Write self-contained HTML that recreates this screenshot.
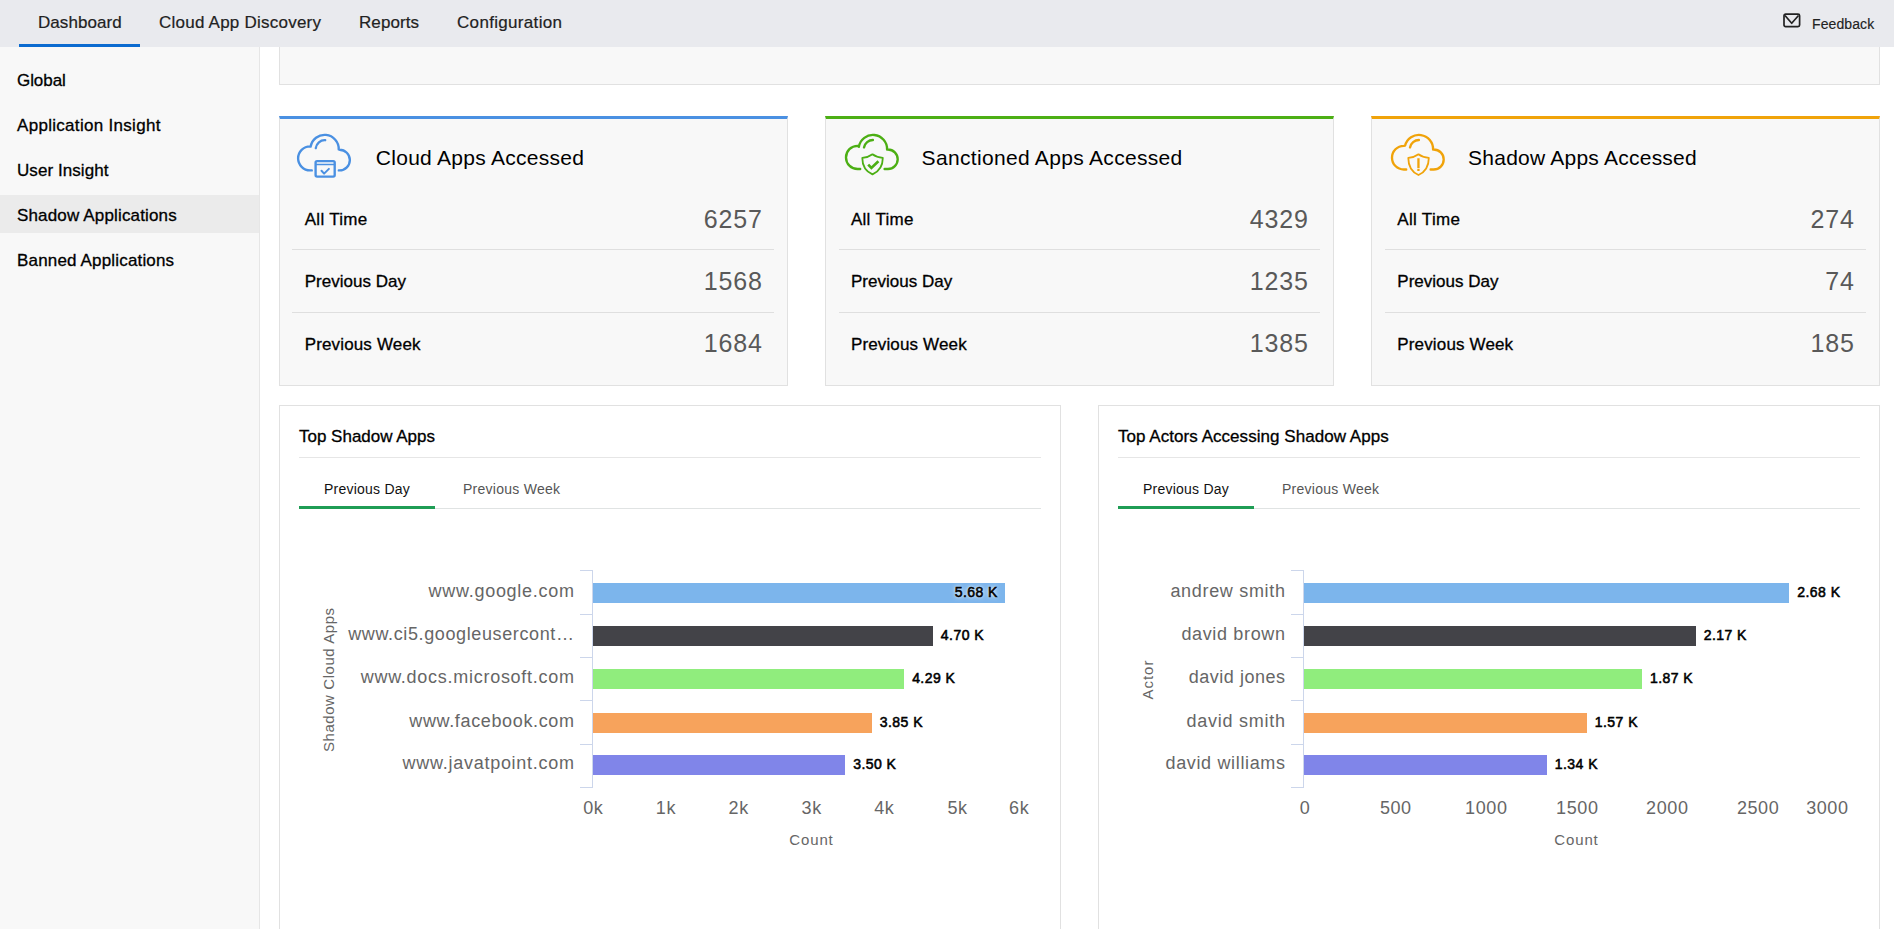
<!DOCTYPE html>
<html>
<head>
<meta charset="utf-8">
<title>Shadow Applications</title>
<style>
html,body{margin:0;padding:0;}
html{width:1894px;height:929px;overflow:hidden;}
body{width:1894px;height:929px;overflow:hidden;position:relative;background:#fff;font-family:"Liberation Sans",sans-serif;}
.b{position:absolute;box-sizing:border-box;}
.t{position:absolute;white-space:pre;font-family:"Liberation Sans",sans-serif;}
svg{position:absolute;overflow:visible;}
</style>
</head>
<body>
<div class="b" style="left:0px;top:0px;width:1894px;height:47px;background:#e9eaee;"></div>
<div class="b" style="left:19px;top:44px;width:121px;height:3px;background:#0b6bd0;"></div>
<svg style="left:1782px;top:12px" width="20" height="17" viewBox="0 0 20 17"><rect x="2" y="2.2" width="15.6" height="12.4" rx="1.6" fill="none" stroke="#222" stroke-width="1.7"/><path d="M3 3.5 L9.7 11.3 L16.5 3.5" fill="none" stroke="#222" stroke-width="1.7" stroke-linejoin="round"/></svg>
<div class="b" style="left:0px;top:47px;width:260px;height:882px;background:#f8f8f8;border-right:1px solid #e6e6e6;"></div>
<div class="b" style="left:0px;top:195px;width:259px;height:38px;background:#ebebeb;"></div>
<div class="b" style="left:279px;top:47px;width:1601px;height:38px;background:#f8f8f8;border:1px solid #e1e1e1;border-top:none;"></div>
<div class="b" style="left:279px;top:116px;width:509px;height:270px;background:#f8f8f8;border:1px solid #e1e1e1;border-top:3px solid #4a90e2;"></div>
<div class="b" style="left:292px;top:249px;width:482px;height:1px;background:#dfdfdf;"></div>
<div class="b" style="left:292px;top:312px;width:482px;height:1px;background:#dfdfdf;"></div>
<svg style="left:294px;top:130px" width="60" height="50" viewBox="0 0 60 50" fill="none" stroke="#4a90e2" stroke-width="2.35" stroke-linecap="round" stroke-linejoin="round"><path d="M17.8,40.4 H16.15 A12.05,12.05 0 0 1 4.1,28.35 A12.05,12.05 0 0 1 16.15,16.3 L16.65,16.58 A14.15,14.15 0 0 1 44.74,19.44 L45.50,19.7 A10.35,10.35 0 0 1 55.85,30.05 A10.35,10.35 0 0 1 45.50,40.4 H44.8"/><path d="M21.8,18.2 A8.9,8.9 0 0 1 31.2,10.2"/><rect x="21.6" y="31.1" width="19.1" height="15.5" rx="1.5" /><path d="M21.8,34.5 H40.7" stroke-width="1.3"/><path d="M27.5,40.8 L30.1,43.6 L34.9,38.9" stroke-width="2"/></svg>
<div class="b" style="left:825px;top:116px;width:509px;height:270px;background:#f8f8f8;border:1px solid #e1e1e1;border-top:3px solid #4caf14;"></div>
<div class="b" style="left:839px;top:249px;width:481px;height:1px;background:#dfdfdf;"></div>
<div class="b" style="left:839px;top:312px;width:481px;height:1px;background:#dfdfdf;"></div>
<svg style="left:841.6px;top:130px" width="60" height="50" viewBox="0 0 60 50" fill="none" stroke="#4caf14" stroke-width="2.35" stroke-linecap="round" stroke-linejoin="round"><path d="M18.2,39.0 H15.60 A11.60,11.60 0 0 1 4.0,27.40 A11.60,11.60 0 0 1 15.60,15.8 L16.90,16.73 A14.2,14.2 0 0 1 45.09,19.60 L45.95,19.5 A9.75,9.75 0 0 1 55.7,29.25 A9.75,9.75 0 0 1 45.95,39.0 H42.6"/><path d="M22.0,17.4 A9.2,9.2 0 0 1 30.9,10.0"/><path d="M30.5,24.3 C28,26.2 24.5,27.5 20.3,27.9 C20.3,36.2 24,41.4 30.5,44.4 C36.9,41.4 40.8,36.2 40.8,27.9 C36.6,27.5 33,26.2 30.5,24.3 Z" stroke-width="1.8"/><path d="M26.2,34.6 L29.4,37.9 L36.4,31.3" stroke-width="2.7" stroke-linecap="butt" stroke-linejoin="miter"/></svg>
<div class="b" style="left:1371px;top:116px;width:509px;height:270px;background:#f8f8f8;border:1px solid #e1e1e1;border-top:3px solid #f0a30a;"></div>
<div class="b" style="left:1385px;top:249px;width:481px;height:1px;background:#dfdfdf;"></div>
<div class="b" style="left:1385px;top:312px;width:481px;height:1px;background:#dfdfdf;"></div>
<svg style="left:1387.6px;top:130px" width="60" height="50" viewBox="0 0 60 50" fill="none" stroke="#f0a30a" stroke-width="2.35" stroke-linecap="round" stroke-linejoin="round"><path d="M18.2,39.5 H15.85 A11.85,11.85 0 0 1 4.0,27.65 A11.85,11.85 0 0 1 15.85,15.8 L17.15,15.55 A14.2,14.2 0 0 1 45.09,19.60 L45.70,19.5 A10.00,10.00 0 0 1 55.7,29.50 A10.00,10.00 0 0 1 45.70,39.5 H42.6"/><path d="M22.0,17.4 A9.2,9.2 0 0 1 30.9,10.0"/><path d="M30.5,24.3 C28,26.2 24.5,27.5 20.3,27.9 C20.3,36.2 24,42.0 30.5,45.0 C36.9,42.0 40.8,36.2 40.8,27.9 C36.6,27.5 33,26.2 30.5,24.3 Z" stroke-width="1.8"/><path d="M30.45,28.2 V38.3 M30.45,38.9 V40.9" stroke-width="2.3" stroke-linecap="butt"/></svg>
<div class="b" style="left:279px;top:405px;width:782px;height:524px;background:#fff;border:1px solid #e1e1e1;border-bottom:none;"></div>
<div class="b" style="left:299px;top:457px;width:742px;height:1px;background:#e6e6e6;"></div>
<div class="b" style="left:299px;top:508px;width:742px;height:1px;background:#e0e3e3;"></div>
<div class="b" style="left:299px;top:506px;width:136px;height:3px;background:#1f9d55;"></div>
<div class="b" style="left:592px;top:570px;width:1px;height:218px;background:#ccd6eb;"></div>
<div class="b" style="left:580px;top:570px;width:12px;height:1px;background:#ccd6eb;"></div>
<div class="b" style="left:580px;top:614px;width:12px;height:1px;background:#ccd6eb;"></div>
<div class="b" style="left:580px;top:657px;width:12px;height:1px;background:#ccd6eb;"></div>
<div class="b" style="left:580px;top:700px;width:12px;height:1px;background:#ccd6eb;"></div>
<div class="b" style="left:580px;top:744px;width:12px;height:1px;background:#ccd6eb;"></div>
<div class="b" style="left:580px;top:787px;width:12px;height:1px;background:#ccd6eb;"></div>
<div class="b" style="left:593px;top:583px;width:412.1px;height:20px;background:#7cb5ec;"></div>
<div class="b" style="left:593px;top:626px;width:339.75px;height:20px;background:#434348;"></div>
<div class="b" style="left:593px;top:669px;width:311.05px;height:20px;background:#90ed7d;"></div>
<div class="b" style="left:593px;top:713px;width:278.7px;height:20px;background:#f7a35c;"></div>
<div class="b" style="left:593px;top:755px;width:252.1px;height:20px;background:#8085e9;"></div>
<div class="b" style="left:1098px;top:405px;width:782px;height:524px;background:#fff;border:1px solid #e1e1e1;border-bottom:none;"></div>
<div class="b" style="left:1118px;top:457px;width:742px;height:1px;background:#e6e6e6;"></div>
<div class="b" style="left:1118px;top:508px;width:742px;height:1px;background:#e0e3e3;"></div>
<div class="b" style="left:1118px;top:506px;width:136px;height:3px;background:#1f9d55;"></div>
<div class="b" style="left:1303px;top:570px;width:1px;height:218px;background:#ccd6eb;"></div>
<div class="b" style="left:1291px;top:570px;width:12px;height:1px;background:#ccd6eb;"></div>
<div class="b" style="left:1291px;top:614px;width:12px;height:1px;background:#ccd6eb;"></div>
<div class="b" style="left:1291px;top:657px;width:12px;height:1px;background:#ccd6eb;"></div>
<div class="b" style="left:1291px;top:700px;width:12px;height:1px;background:#ccd6eb;"></div>
<div class="b" style="left:1291px;top:744px;width:12px;height:1px;background:#ccd6eb;"></div>
<div class="b" style="left:1291px;top:787px;width:12px;height:1px;background:#ccd6eb;"></div>
<div class="b" style="left:1304px;top:583px;width:485.2px;height:20px;background:#7cb5ec;"></div>
<div class="b" style="left:1304px;top:626px;width:391.65px;height:20px;background:#434348;"></div>
<div class="b" style="left:1304px;top:669px;width:337.9px;height:20px;background:#90ed7d;"></div>
<div class="b" style="left:1304px;top:713px;width:282.7px;height:20px;background:#f7a35c;"></div>
<div class="b" style="left:1304px;top:755px;width:242.7px;height:20px;background:#8085e9;"></div>
<div class="t" style="left:38.00px;top:12px;font-size:17px;line-height:22px;color:#222;letter-spacing:0.054px;-webkit-text-stroke:0.2px #222;">Dashboard</div>
<div class="t" style="left:159.00px;top:12px;font-size:17px;line-height:22px;color:#222;letter-spacing:0.233px;-webkit-text-stroke:0.2px #222;">Cloud App Discovery</div>
<div class="t" style="left:359.00px;top:12px;font-size:17px;line-height:22px;color:#222;letter-spacing:0.078px;-webkit-text-stroke:0.2px #222;">Reports</div>
<div class="t" style="left:457.00px;top:12px;font-size:17px;line-height:22px;color:#222;letter-spacing:0.323px;-webkit-text-stroke:0.2px #222;">Configuration</div>
<div class="t" style="left:1812.00px;top:15px;font-size:14px;line-height:18px;color:#222;letter-spacing:0.102px;-webkit-text-stroke:0.15px #222;">Feedback</div>
<div class="t" style="left:17.00px;top:70px;font-size:17px;line-height:22px;color:#000;letter-spacing:-0.068px;-webkit-text-stroke:0.3px #000;">Global</div>
<div class="t" style="left:17.00px;top:115px;font-size:17px;line-height:22px;color:#000;letter-spacing:0.301px;-webkit-text-stroke:0.3px #000;">Application Insight</div>
<div class="t" style="left:17.00px;top:160px;font-size:17px;line-height:22px;color:#000;letter-spacing:0.072px;-webkit-text-stroke:0.3px #000;">User Insight</div>
<div class="t" style="left:17.00px;top:205px;font-size:17px;line-height:22px;color:#000;letter-spacing:0.156px;-webkit-text-stroke:0.3px #000;">Shadow Applications</div>
<div class="t" style="left:17.00px;top:250px;font-size:17px;line-height:22px;color:#000;letter-spacing:0.169px;-webkit-text-stroke:0.3px #000;">Banned Applications</div>
<div class="t" style="left:375.80px;top:144px;font-size:21px;line-height:27px;color:#000;letter-spacing:0.281px;">Cloud Apps Accessed</div>
<div class="t" style="left:304.70px;top:209px;font-size:17px;line-height:22px;color:#000;letter-spacing:0.304px;-webkit-text-stroke:0.3px #000;">All Time</div>
<div class="t" style="left:703.73px;top:203px;font-size:25px;line-height:32px;color:#595959;letter-spacing:0.850px;">6257</div>
<div class="t" style="left:304.70px;top:271px;font-size:17px;line-height:22px;color:#000;letter-spacing:0.017px;-webkit-text-stroke:0.3px #000;">Previous Day</div>
<div class="t" style="left:703.73px;top:265px;font-size:25px;line-height:32px;color:#595959;letter-spacing:0.850px;">1568</div>
<div class="t" style="left:304.70px;top:334px;font-size:17px;line-height:22px;color:#000;letter-spacing:0.149px;-webkit-text-stroke:0.3px #000;">Previous Week</div>
<div class="t" style="left:703.73px;top:327px;font-size:25px;line-height:32px;color:#595959;letter-spacing:0.850px;">1684</div>
<div class="t" style="left:921.60px;top:144px;font-size:21px;line-height:27px;color:#000;letter-spacing:0.320px;">Sanctioned Apps Accessed</div>
<div class="t" style="left:850.90px;top:209px;font-size:17px;line-height:22px;color:#000;letter-spacing:0.304px;-webkit-text-stroke:0.3px #000;">All Time</div>
<div class="t" style="left:1249.73px;top:203px;font-size:25px;line-height:32px;color:#595959;letter-spacing:0.850px;">4329</div>
<div class="t" style="left:850.90px;top:271px;font-size:17px;line-height:22px;color:#000;letter-spacing:0.017px;-webkit-text-stroke:0.3px #000;">Previous Day</div>
<div class="t" style="left:1249.73px;top:265px;font-size:25px;line-height:32px;color:#595959;letter-spacing:0.850px;">1235</div>
<div class="t" style="left:850.90px;top:334px;font-size:17px;line-height:22px;color:#000;letter-spacing:0.149px;-webkit-text-stroke:0.3px #000;">Previous Week</div>
<div class="t" style="left:1249.73px;top:327px;font-size:25px;line-height:32px;color:#595959;letter-spacing:0.850px;">1385</div>
<div class="t" style="left:1468.10px;top:144px;font-size:21px;line-height:27px;color:#000;letter-spacing:0.234px;">Shadow Apps Accessed</div>
<div class="t" style="left:1397.30px;top:209px;font-size:17px;line-height:22px;color:#000;letter-spacing:0.304px;-webkit-text-stroke:0.3px #000;">All Time</div>
<div class="t" style="left:1810.48px;top:203px;font-size:25px;line-height:32px;color:#595959;letter-spacing:0.850px;">274</div>
<div class="t" style="left:1397.30px;top:271px;font-size:17px;line-height:22px;color:#000;letter-spacing:0.017px;-webkit-text-stroke:0.3px #000;">Previous Day</div>
<div class="t" style="left:1825.24px;top:265px;font-size:25px;line-height:32px;color:#595959;letter-spacing:0.850px;">74</div>
<div class="t" style="left:1397.30px;top:334px;font-size:17px;line-height:22px;color:#000;letter-spacing:0.149px;-webkit-text-stroke:0.3px #000;">Previous Week</div>
<div class="t" style="left:1810.48px;top:327px;font-size:25px;line-height:32px;color:#595959;letter-spacing:0.850px;">185</div>
<div class="t" style="left:299.00px;top:426px;font-size:17px;line-height:22px;color:#000;letter-spacing:-0.008px;-webkit-text-stroke:0.3px #000;">Top Shadow Apps</div>
<div class="t" style="left:324.00px;top:480px;font-size:14px;line-height:18px;color:#111;letter-spacing:0.230px;">Previous Day</div>
<div class="t" style="left:463.00px;top:480px;font-size:14px;line-height:18px;color:#555;letter-spacing:0.258px;">Previous Week</div>
<div class="t" style="left:428.50px;top:580px;font-size:18px;line-height:23px;color:#666;letter-spacing:0.725px;">www.google.com</div>
<div class="t" style="left:954.70px;top:583px;font-size:14px;line-height:18px;color:#000;letter-spacing:0.423px;-webkit-text-stroke:0.55px #000;text-shadow:0 0 3px rgba(255,255,255,.9),0 0 5px rgba(255,255,255,.7),0 0 7px rgba(255,255,255,.45);">5.68 K</div>
<div class="t" style="left:348.20px;top:623px;font-size:18px;line-height:23px;color:#666;letter-spacing:0.622px;">www.ci5.googleusercont…</div>
<div class="t" style="left:940.85px;top:626px;font-size:14px;line-height:18px;color:#000;letter-spacing:0.443px;-webkit-text-stroke:0.55px #000;">4.70 K</div>
<div class="t" style="left:360.70px;top:666px;font-size:18px;line-height:23px;color:#666;letter-spacing:0.726px;">www.docs.microsoft.com</div>
<div class="t" style="left:912.15px;top:669px;font-size:14px;line-height:18px;color:#000;letter-spacing:0.443px;-webkit-text-stroke:0.55px #000;">4.29 K</div>
<div class="t" style="left:409.30px;top:710px;font-size:18px;line-height:23px;color:#666;letter-spacing:0.641px;">www.facebook.com</div>
<div class="t" style="left:879.80px;top:713px;font-size:14px;line-height:18px;color:#000;letter-spacing:0.443px;-webkit-text-stroke:0.55px #000;">3.85 K</div>
<div class="t" style="left:402.60px;top:752px;font-size:18px;line-height:23px;color:#666;letter-spacing:0.725px;">www.javatpoint.com</div>
<div class="t" style="left:853.20px;top:755px;font-size:14px;line-height:18px;color:#000;letter-spacing:0.443px;-webkit-text-stroke:0.55px #000;">3.50 K</div>
<div class="t" style="left:583.19px;top:797px;font-size:18px;line-height:23px;color:#666;letter-spacing:0.600px;">0k</div>
<div class="t" style="left:655.79px;top:797px;font-size:18px;line-height:23px;color:#666;letter-spacing:0.600px;">1k</div>
<div class="t" style="left:728.59px;top:797px;font-size:18px;line-height:23px;color:#666;letter-spacing:0.600px;">2k</div>
<div class="t" style="left:801.59px;top:797px;font-size:18px;line-height:23px;color:#666;letter-spacing:0.600px;">3k</div>
<div class="t" style="left:874.19px;top:797px;font-size:18px;line-height:23px;color:#666;letter-spacing:0.600px;">4k</div>
<div class="t" style="left:947.39px;top:797px;font-size:18px;line-height:23px;color:#666;letter-spacing:0.600px;">5k</div>
<div class="t" style="left:1009.08px;top:797px;font-size:18px;line-height:23px;color:#666;letter-spacing:0.600px;">6k</div>
<div class="t" style="left:789.20px;top:830px;font-size:15px;line-height:20px;color:#666;letter-spacing:0.892px;">Count</div>
<div class="t" style="left:261.90px;top:665px;font-size:15px;line-height:20px;color:#666;letter-spacing:0.568px;transform-origin:72.10px 15px;transform:translate(0.00px,0) rotate(-90deg);">Shadow Cloud Apps</div>
<div class="t" style="left:1118.00px;top:426px;font-size:17px;line-height:22px;color:#000;letter-spacing:0.044px;-webkit-text-stroke:0.3px #000;">Top Actors Accessing Shadow Apps</div>
<div class="t" style="left:1143.00px;top:480px;font-size:14px;line-height:18px;color:#111;letter-spacing:0.230px;">Previous Day</div>
<div class="t" style="left:1282.00px;top:480px;font-size:14px;line-height:18px;color:#555;letter-spacing:0.258px;">Previous Week</div>
<div class="t" style="left:1170.40px;top:580px;font-size:18px;line-height:23px;color:#666;letter-spacing:0.687px;">andrew smith</div>
<div class="t" style="left:1797.30px;top:583px;font-size:14px;line-height:18px;color:#000;letter-spacing:0.443px;-webkit-text-stroke:0.55px #000;">2.68 K</div>
<div class="t" style="left:1181.40px;top:623px;font-size:18px;line-height:23px;color:#666;letter-spacing:0.654px;">david brown</div>
<div class="t" style="left:1703.75px;top:626px;font-size:14px;line-height:18px;color:#000;letter-spacing:0.443px;-webkit-text-stroke:0.55px #000;">2.17 K</div>
<div class="t" style="left:1188.80px;top:666px;font-size:18px;line-height:23px;color:#666;letter-spacing:0.512px;">david jones</div>
<div class="t" style="left:1650.00px;top:669px;font-size:14px;line-height:18px;color:#000;letter-spacing:0.443px;-webkit-text-stroke:0.55px #000;">1.87 K</div>
<div class="t" style="left:1186.50px;top:710px;font-size:18px;line-height:23px;color:#666;letter-spacing:0.745px;">david smith</div>
<div class="t" style="left:1594.80px;top:713px;font-size:14px;line-height:18px;color:#000;letter-spacing:0.443px;-webkit-text-stroke:0.55px #000;">1.57 K</div>
<div class="t" style="left:1165.50px;top:752px;font-size:18px;line-height:23px;color:#666;letter-spacing:0.650px;">david williams</div>
<div class="t" style="left:1554.80px;top:755px;font-size:14px;line-height:18px;color:#000;letter-spacing:0.443px;-webkit-text-stroke:0.55px #000;">1.34 K</div>
<div class="t" style="left:1299.69px;top:797px;font-size:18px;line-height:23px;color:#666;letter-spacing:0.600px;">0</div>
<div class="t" style="left:1379.88px;top:797px;font-size:18px;line-height:23px;color:#666;letter-spacing:0.600px;">500</div>
<div class="t" style="left:1465.08px;top:797px;font-size:18px;line-height:23px;color:#666;letter-spacing:0.600px;">1000</div>
<div class="t" style="left:1556.08px;top:797px;font-size:18px;line-height:23px;color:#666;letter-spacing:0.600px;">1500</div>
<div class="t" style="left:1646.08px;top:797px;font-size:18px;line-height:23px;color:#666;letter-spacing:0.600px;">2000</div>
<div class="t" style="left:1736.88px;top:797px;font-size:18px;line-height:23px;color:#666;letter-spacing:0.600px;">2500</div>
<div class="t" style="left:1806.15px;top:797px;font-size:18px;line-height:23px;color:#666;letter-spacing:0.600px;">3000</div>
<div class="t" style="left:1554.20px;top:830px;font-size:15px;line-height:20px;color:#666;letter-spacing:0.892px;">Count</div>
<div class="t" style="left:1133.60px;top:665px;font-size:15px;line-height:20px;color:#666;letter-spacing:0.946px;transform-origin:19.40px 15px;transform:translate(0.00px,0) rotate(-90deg);">Actor</div>
</body>
</html>
